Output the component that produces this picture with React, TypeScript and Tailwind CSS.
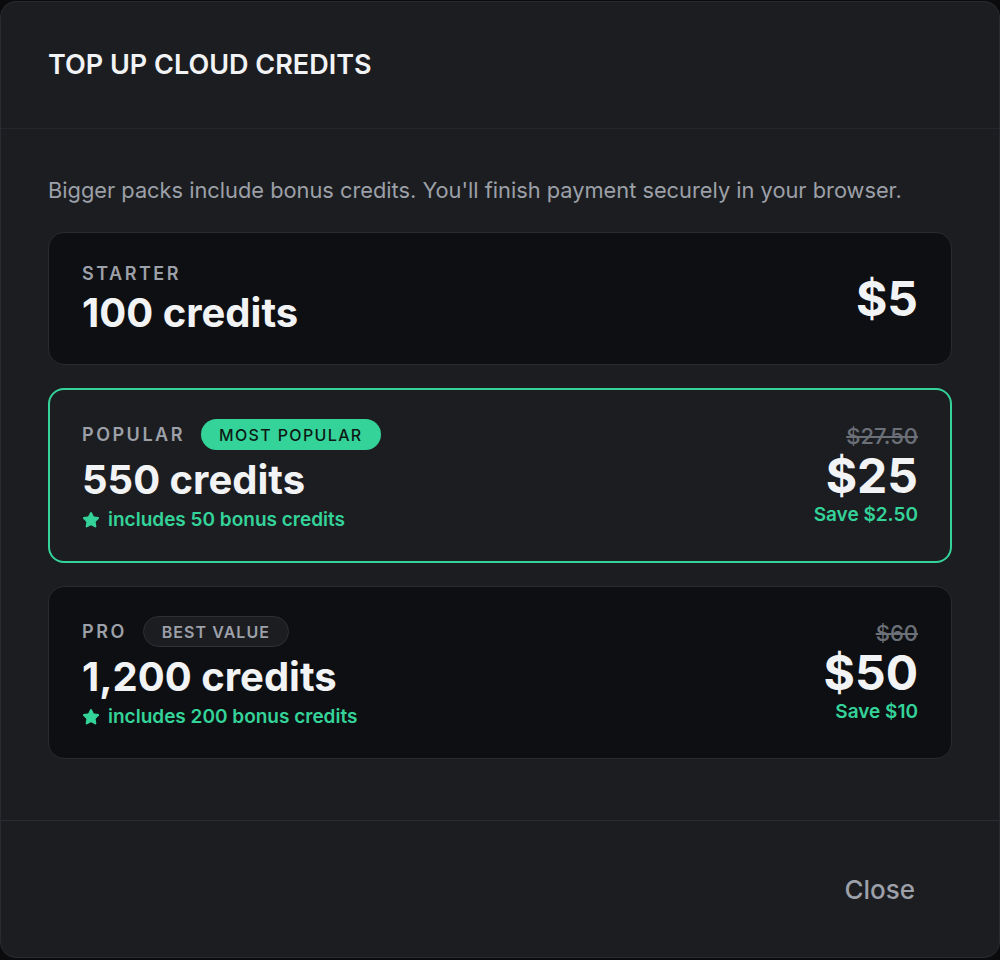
import { Star } from 'lucide-react';

type Pack = {
    tier: string;
    badge?: 'popular' | 'value';
    credits: string;
    bonus?: string;
    was?: string;
    price: string;
    save?: string;
};

const packs: Pack[] = [
    { tier: 'Starter', credits: '100 credits', price: '$5' },
    { tier: 'Popular', badge: 'popular', credits: '550 credits', bonus: 'includes 50 bonus credits', was: '$27.50', price: '$25', save: 'Save $2.50' },
    { tier: 'Pro', badge: 'value', credits: '1,200 credits', bonus: 'includes 200 bonus credits', was: '$60', price: '$50', save: 'Save $10' },
];

const PackCard = ({ pack }: { pack: Pack }) => {
    const featured = pack.badge === 'popular';

    return (
        <button
            className={
                featured
                    ? 'w-full text-left flex items-center justify-between rounded-2xl border-2 border-[#34d399] bg-[#1c1d21] py-[29px] px-8'
                    : 'w-full text-left flex items-center justify-between rounded-2xl border border-[#2a2b30] bg-[#0e0f12] py-[29px] px-[33px]'
            }
        >
            <div className="flex flex-col">
                <div className="flex items-center gap-4">
                    <span className="text-[18px] leading-6 font-semibold uppercase tracking-[0.14em] text-[#9ca0a8]">{pack.tier}</span>
                    {pack.badge === 'popular' && (
                        <span className="h-[31px] px-[18px] flex items-center rounded-full bg-[#34d399] text-[#0c1a14] text-[16px] font-medium tracking-[0.085em] uppercase">
                            Most popular
                        </span>
                    )}
                    {pack.badge === 'value' && (
                        <span className="h-[31px] px-[18px] flex items-center rounded-full bg-[#1c1d21] border border-[#2e3036] text-[#9ca0a8] text-[16px] font-semibold tracking-[0.065em] uppercase">
                            Best value
                        </span>
                    )}
                </div>
                <span className={pack.badge ? 'mt-2 text-[40px] leading-[44px] font-bold text-[#f2f3f5]' : 'mt-[5px] text-[40px] leading-[44px] font-bold text-[#f2f3f5]'}>
                    {pack.credits}
                </span>
                {pack.bonus && (
                    <span className="mt-1.5 flex items-center gap-2 text-[19px] leading-6 font-semibold text-[#34d399]">
                        <Star size={18} fill="currentColor" strokeWidth={1.5} />
                        {pack.bonus}
                    </span>
                )}
            </div>
            <div className="flex flex-col items-end">
                {pack.was && <span className="text-[22px] leading-[22px] font-medium text-[#6b6f78] line-through">{pack.was}</span>}
                <span className={pack.was ? 'mt-[5px] text-[48px] leading-[48px] font-bold text-[#f2f3f5]' : 'text-[48px] leading-[48px] font-bold text-[#f2f3f5]'}>
                    {pack.price}
                </span>
                {pack.save && <span className="mt-[3px] text-[19px] leading-6 font-semibold text-[#34d399]">{pack.save}</span>}
            </div>
        </button>
    );
};

export default function App() {
    return (
        <div className="w-[1000px] h-[960px] bg-[#0b0b0d] pt-px" style={{ fontFamily: 'Inter, "Noto Sans", sans-serif' }}>
            <div className="h-[957px] flex flex-col rounded-2xl border border-[#2a2b30] bg-[#1c1d21]">
                {/* Header */}
                <div className="h-[127px] flex items-center px-[47px] border-b border-[#25262b]">
                    <h2 className="text-[27px] font-semibold text-[#f2f3f5] uppercase">Top up cloud credits</h2>
                </div>

                {/* Body */}
                <div className="px-[47px] pt-[45px] pb-[61px] border-b border-[#2a2b30]">
                    <p className="text-[21.8px] leading-8 text-[#9ca0a8]">
                        Bigger packs include bonus credits. You'll finish payment securely in your browser.
                    </p>
                    <div className="mt-[26px] flex flex-col gap-[23px]">
                        {packs.map((p) => (
                            <PackCard key={p.tier} pack={p} />
                        ))}
                    </div>
                </div>

                {/* Footer */}
                <div className="flex-1 flex items-center justify-end pr-[52px]">
                    <button className="px-8 py-3 text-[26px] font-medium text-[#9ca0a8] rounded-lg">Close</button>
                </div>
            </div>
        </div>
    );
}
